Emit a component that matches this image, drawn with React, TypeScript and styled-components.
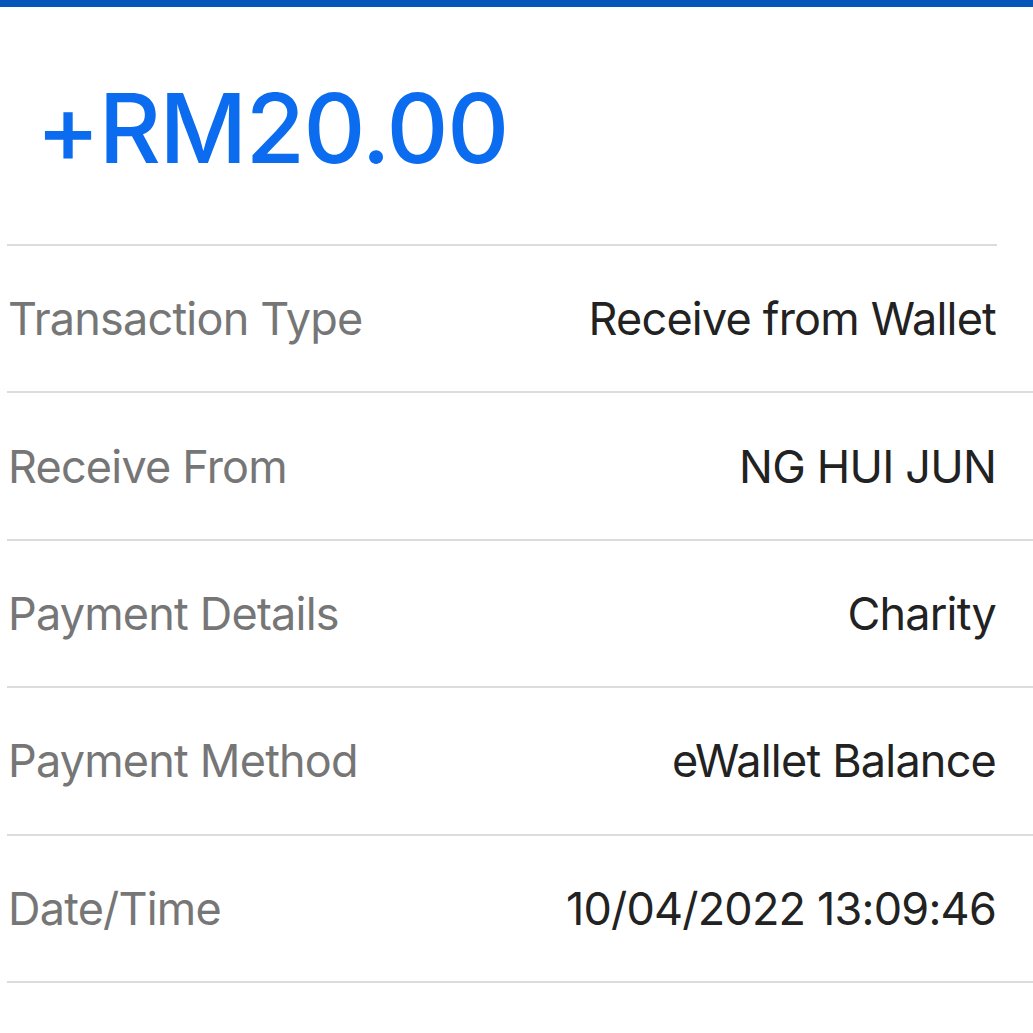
import styled, { createGlobalStyle } from "styled-components";

const GlobalStyle = createGlobalStyle`
    html, body {
        margin: 0;
        padding: 0;
        background: #ffffff;
    }
    body {
        font-family: Inter, "Noto Sans", sans-serif;
    }
`;

const Page = styled.div`
    width: 1033px;
    min-height: 1033px;
    background: #ffffff;
    overflow: hidden;
`;

const TopBar = styled.div`
    height: 7px;
    background: #0656b9;
`;

const AmountBlock = styled.div`
    height: 239px;
    margin: 0 36px 0 7px;
    border-bottom: 2px solid #dcdcdc;
    display: flex;
    align-items: center;
    padding-left: 29px;
    box-sizing: border-box;
`;

const Amount = styled.h1`
    margin: 0;
    font-size: 96px;
    font-weight: 500;
    color: #0b6cf0;
    letter-spacing: -1.4px;
    line-height: 1;
    margin-top: 4px;
`;

const List = styled.div`
    display: flex;
    flex-direction: column;
    margin-left: 7px;
`;

const Row = styled.div`
    height: 147.4px;
    box-sizing: border-box;
    border-bottom: 2px solid #dcdcdc;
    display: flex;
    align-items: center;
    justify-content: space-between;
    padding: 0 37px 0 1px;
    font-size: 45px;
    letter-spacing: -0.8px;
`;

const Label = styled.span`
    color: #767676;
`;

const Value = styled.span`
    color: #222222;
`;

const details = [
    { label: "Transaction Type", value: "Receive from Wallet" },
    { label: "Receive From", value: "NG HUI JUN" },
    { label: "Payment Details", value: "Charity" },
    { label: "Payment Method", value: "eWallet Balance" },
    { label: "Date/Time", value: "10/04/2022 13:09:46" },
];

export default function App(): JSX.Element {
    return (
        <Page>
            <GlobalStyle />
            <TopBar />
            <AmountBlock>
                <Amount>+RM20.00</Amount>
            </AmountBlock>
            <List>
                {details.map((d) => (
                    <Row key={d.label}>
                        <Label>{d.label}</Label>
                        <Value>{d.value}</Value>
                    </Row>
                ))}
            </List>
        </Page>
    );
}
